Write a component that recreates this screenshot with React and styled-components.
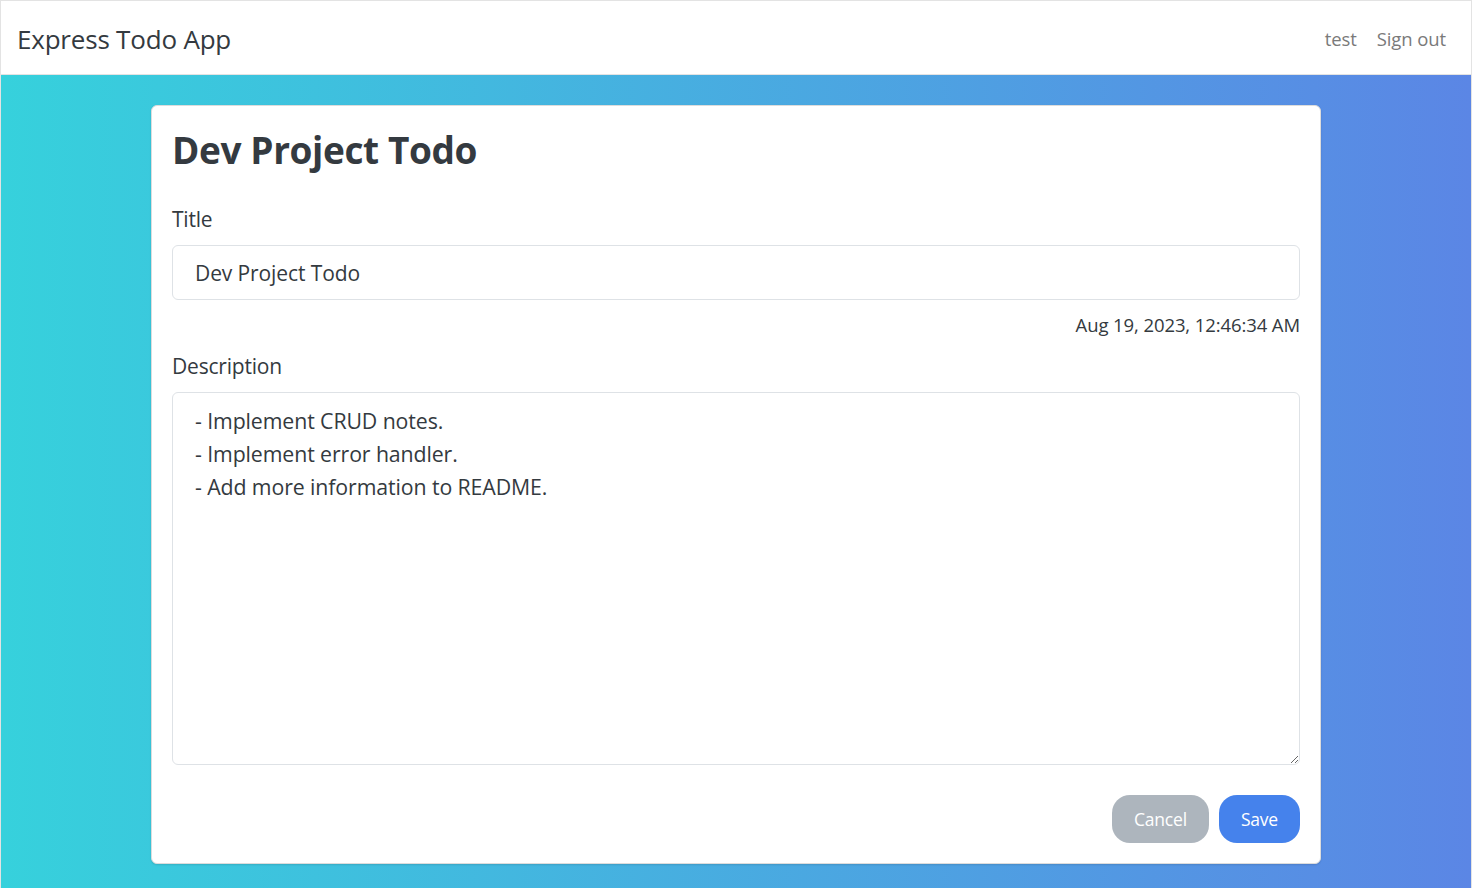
import styled, { createGlobalStyle } from "styled-components";

const GlobalStyle = createGlobalStyle`
  * {
    box-sizing: border-box;
  }

  body {
    margin: 0;
    font-family: "Open Sans", "Noto Sans", sans-serif;
    color: #343a40;
  }
`;

const Page = styled.div`
  min-height: 100vh;
  background: linear-gradient(to right, #36d1dc, #5b86e5);
  border-left: 1px solid #e3e3e3;
  border-right: 1px solid #e3e3e3;
`;

const NavBar = styled.nav`
  height: 75px;
  background: #fff;
  border-top: 1px solid #e3e3e3;
  border-bottom: 1px solid #e3e3e3;
  display: flex;
  align-items: center;
  justify-content: space-between;
  padding: 0 25px 0 16px;
`;

const Brand = styled.a`
  font-size: 26px;
  color: #343a40;
  text-decoration: none;
  letter-spacing: -0.2px;
  margin-top: 2px;
`;

const NavLinks = styled.div`
  display: flex;
  gap: 20px;
  margin-top: 2px;
`;

const NavLink = styled.a`
  font-size: 18.5px;
  color: #7a7a7a;
  text-decoration: none;
  letter-spacing: -0.1px;
`;

const Main = styled.main`
  padding: 30px 0 25px;
`;

const Card = styled.div`
  width: 1170px;
  margin: 0 auto;
  background: #fff;
  border: 1px solid #dcdcdc;
  border-radius: 6px;
  box-shadow: 0 1px 2px rgba(0, 0, 0, 0.12);
  padding: 20px 20px 20px;
`;

const Heading = styled.h1`
  margin: 0 0 31px;
  font-size: 37px;
  font-weight: 700;
  line-height: 48px;
  letter-spacing: -0.4px;
  color: #343a40;
`;

const Field = styled.div`
  display: flex;
  flex-direction: column;
`;

const Label = styled.label`
  font-size: 21px;
  line-height: 28px;
  margin-bottom: 12px;
  letter-spacing: -0.2px;
`;

const TextInput = styled.input`
  height: 55px;
  width: 100%;
  border: 1px solid #dee2e6;
  border-radius: 6px;
  padding: 0 22px;
  font-family: inherit;
  font-size: 21px;
  color: #343a40;
  letter-spacing: -0.1px;
  outline: none;
`;

const Timestamp = styled.div`
  text-align: right;
  font-size: 18.5px;
  line-height: 24px;
  margin: 13px 0 15px;
  letter-spacing: -0.1px;
`;

const TextArea = styled.textarea`
  height: 373px;
  width: 100%;
  border: 1px solid #dee2e6;
  border-radius: 6px;
  padding: 11px 22px;
  font-family: inherit;
  font-size: 21.3px;
  line-height: 33px;
  color: #343a40;
  letter-spacing: -0.1px;
  resize: vertical;
  outline: none;
`;

const Actions = styled.div`
  display: flex;
  justify-content: flex-end;
  gap: 10px;
  margin-top: 30px;
`;

const Button = styled.button`
  height: 48px;
  padding: 0 22px;
  border: none;
  border-radius: 18px;
  font-family: inherit;
  font-size: 17.5px;
  color: #fff;
  background: ${(p) => (p.$primary ? "#4582ec" : "#adb5bd")};
  letter-spacing: -0.2px;
  cursor: pointer;
`;

const description = `- Implement CRUD notes.
- Implement error handler.
- Add more information to README.`;

function App() {
  return (
    <Page>
      <GlobalStyle />
      <NavBar>
        <Brand href="#">Express Todo App</Brand>
        <NavLinks>
          <NavLink href="#">test</NavLink>
          <NavLink href="#">Sign out</NavLink>
        </NavLinks>
      </NavBar>
      <Main>
        <Card>
          <Heading>Dev Project Todo</Heading>
          <Field>
            <Label htmlFor="title">Title</Label>
            <TextInput id="title" defaultValue="Dev Project Todo" />
          </Field>
          <Timestamp>Aug 19, 2023, 12:46:34 AM</Timestamp>
          <Field>
            <Label htmlFor="description">Description</Label>
            <TextArea id="description" defaultValue={description} />
          </Field>
          <Actions>
            <Button>Cancel</Button>
            <Button $primary>Save</Button>
          </Actions>
        </Card>
      </Main>
    </Page>
  );
}

export default App;
